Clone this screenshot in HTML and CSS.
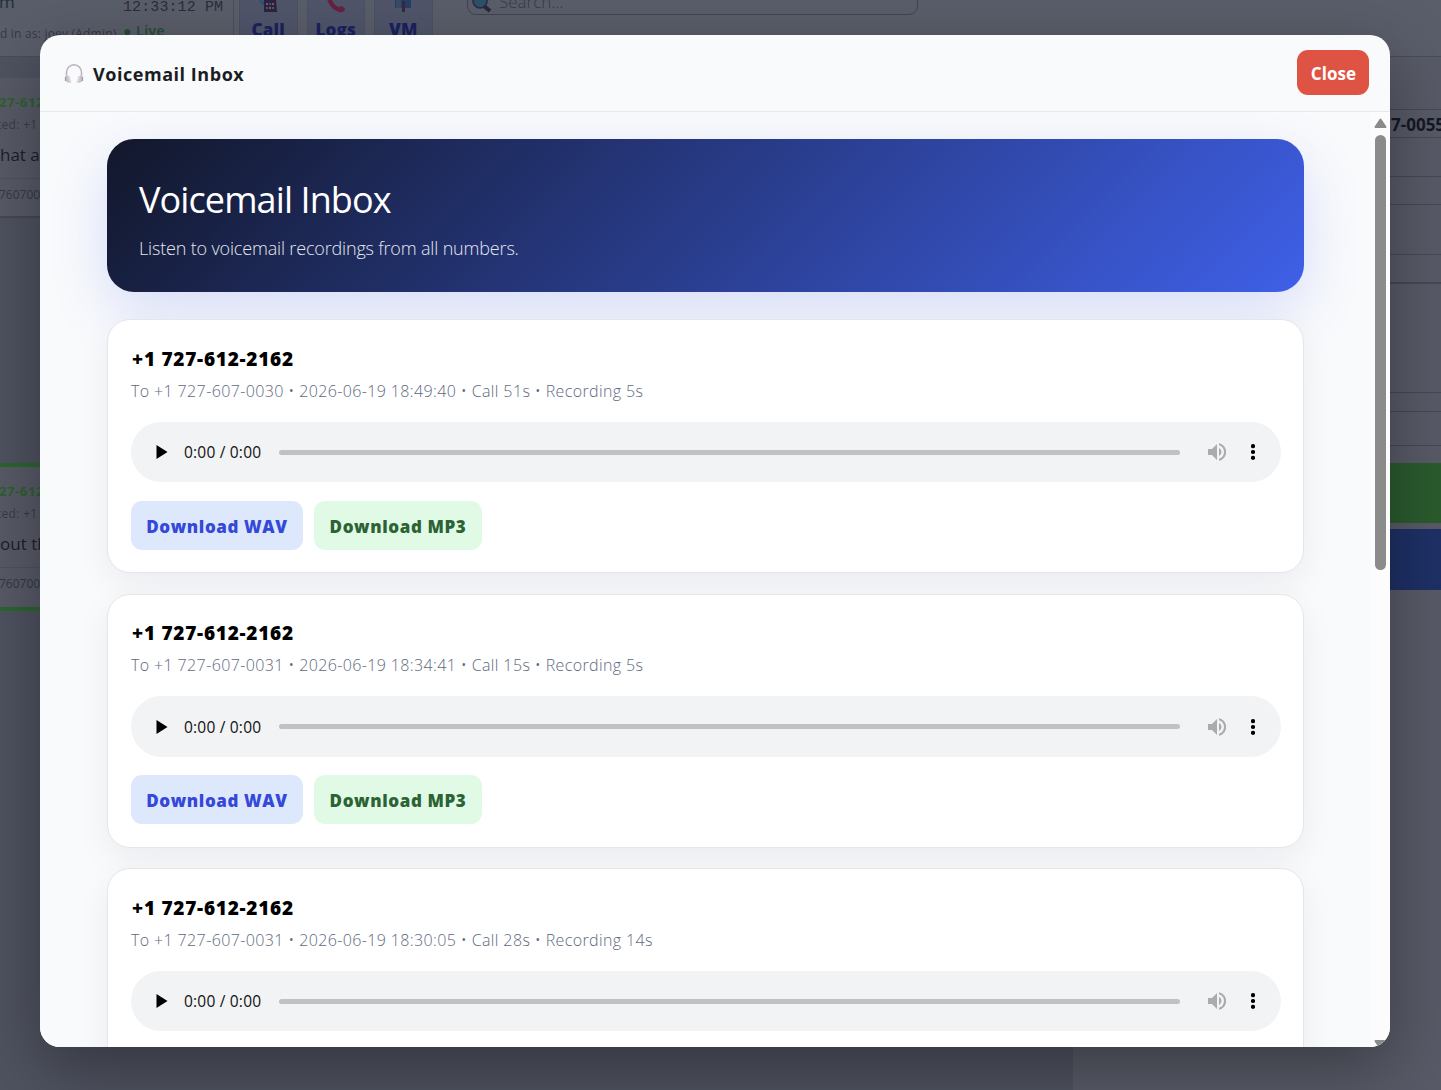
FILE: index.html
```
<!DOCTYPE html>
<html lang="en">
<head>
<meta charset="utf-8">
<title>Voicemail Inbox</title>
<link rel="stylesheet" href="styles.css">
</head>
<body>
<svg class="defs" width="0" height="0" aria-hidden="true">
  <symbol id="play" viewBox="0 0 12 16"><path d="M.5 1v14L11.500 8z"/></symbol>
  <symbol id="volume" viewBox="0 0 18 18"><path d="M0 6v6h4l5 5V1L4 6zM13.500 9A4.500 4.500 0 0 0 11 5v8a4.500 4.500 0 0 0 2.500-4zM11 .2v2.100a7 7 0 0 1 0 13.400v2.100a9 9 0 0 0 0-17.600z"/></symbol>
  <symbol id="more" viewBox="0 0 4 16"><circle cx="2" cy="2.200" r="2.100"/><circle cx="2" cy="8" r="2.100"/><circle cx="2" cy="13.800" r="2.100"/></symbol>
</svg>

<div class="app">
  <header class="topbar">
    <div class="account"><span class="account-name">m</span><span class="account-user">d in as: joey (Admin)</span></div>
    <div class="clock"><span class="clock-time">12:33:12 PM</span><span class="clock-live">● Live</span></div>
    <nav class="shortcuts">
      <div class="shortcut">
        <svg width="20" height="22" viewBox="0 0 20 22"><path d="M0 9l6 1v5l-3-3z" fill="#2b5376"/><path d="M6 8h12l1 13H6z" fill="#2c2245"/><path d="M8 12h2v2H8zM14 12h2v2h-2zM11 16h2v2h-2z" fill="#865b3d"/><path d="M11 12h2v2h-2zM8 16h2v2H8zM14 16h2v2h-2z" fill="#365a79"/></svg>
        <span>Call</span></div>
      <div class="shortcut">
        <svg width="20" height="22" viewBox="0 0 20 22"><path d="M1 8l4-1 2 4q2 4 6 5l3-1 3 3q-1 4-6 3Q4 18 1 8z" fill="#66213f"/></svg>
        <span>Logs</span></div>
      <div class="shortcut">
        <svg width="20" height="22" viewBox="0 0 20 22"><path d="M2 8h16v9H2z" fill="#263f6a"/><path d="M3 9h5v8H3z" fill="#394c68"/><path d="M9 10h3v11H9z" fill="#3a2938"/></svg>
        <span>VM</span></div>
    </nav>
    <div class="search">
      <svg width="20" height="22" viewBox="0 0 20 22"><path d="M12 14l6 5" stroke="#30233f" stroke-width="4"/><circle cx="8" cy="9" r="7" fill="#2e5068" stroke="#252d43" stroke-width="1.500"/></svg>
      <span>Search...</span>
    </div>
  </header>
  <main class="threads">
    <article class="thread">
      <b>27-612</b><small>ted: +1</small><p>hat a</p><footer>760700</footer>
    </article>
    <article class="thread thread-active">
      <b>27-612</b><small>ted: +1</small><p>out th</p><footer>760700</footer>
    </article>
  </main>
  <aside class="details">
    <div class="row row-a"></div>
    <div class="row row-number">7-0055</div>
    <div class="row row-b"></div>
    <div class="row row-c"></div>
    <div class="row row-d"></div>
    <div class="row row-e"></div>
    <div class="row row-f"></div>
    <div class="row row-g"></div>
    <div class="row row-h"></div>
    <div class="row row-i"></div>
    <div class="action action-green"></div>
    <div class="action action-blue"></div>
  </aside>
</div>

<section class="modal" role="dialog" aria-label="Voicemail Inbox">
  <header class="modal-head">
    <svg class="headphones" width="20" height="22" viewBox="0 0 20 22"><path d="M2.500 14V9.500a7.500 7.800 0 0 1 15 0V14" fill="none" stroke="#b9b4bb" stroke-width="1.500"/><path d="M2 12.500l3 .5 2 7-3-.5q-3-1-3-4zM18 12.500l-3 .5-2 7 3-.5q3-1 3-4z" fill="#c9c2cc"/><path d="M5 13.500l1.800 6M15 13.500l-1.800 6" stroke="#e5dbe9" stroke-width="1.800"/><path d="M1.500 14v4M18.500 14v4" stroke="#9d98a1" stroke-width="1.200"/></svg>
    <h2>Voicemail Inbox</h2>
    <button class="close">Close</button>
  </header>
  <div class="modal-body">
    <div class="content">
      <div class="hero">
        <h1>Voicemail Inbox</h1>
        <p>Listen to voicemail recordings from all numbers.</p>
      </div>
      <article class="card">
        <h3>+1 727-612-2162</h3>
        <p class="meta">To +1 727-607-0030 • 2026-06-19 18:49:40 • Call 51s • Recording 5s</p>
        <div class="player"><svg class="play"><use href="#play"/></svg><span class="time">0:00 / 0:00</span><i class="track"></i><svg class="volume"><use href="#volume"/></svg><svg class="more"><use href="#more"/></svg></div>
        <div class="buttons"><a class="btn wav">Download WAV</a><a class="btn mp3">Download MP3</a></div>
      </article>
      <article class="card">
        <h3>+1 727-612-2162</h3>
        <p class="meta">To +1 727-607-0031 • 2026-06-19 18:34:41 • Call 15s • Recording 5s</p>
        <div class="player"><svg class="play"><use href="#play"/></svg><span class="time">0:00 / 0:00</span><i class="track"></i><svg class="volume"><use href="#volume"/></svg><svg class="more"><use href="#more"/></svg></div>
        <div class="buttons"><a class="btn wav">Download WAV</a><a class="btn mp3">Download MP3</a></div>
      </article>
      <article class="card">
        <h3>+1 727-612-2162</h3>
        <p class="meta">To +1 727-607-0031 • 2026-06-19 18:30:05 • Call 28s • Recording 14s</p>
        <div class="player"><svg class="play"><use href="#play"/></svg><span class="time">0:00 / 0:00</span><i class="track"></i><svg class="volume"><use href="#volume"/></svg><svg class="more"><use href="#more"/></svg></div>
      </article>
    </div>
    <div class="scrollbar">
      <svg width="13" height="11" viewBox="0 0 13 11"><path d="M6.500 1.500L11.500 9h-10z" fill="#8b8b8b" stroke="#8b8b8b" stroke-width="2" stroke-linejoin="round"/></svg>
      <i class="thumb"></i>
      <svg class="down" width="13" height="11" viewBox="0 0 13 11"><path d="M6.500 9.500L11.500 2h-10z" fill="#8b8b8b" stroke="#8b8b8b" stroke-width="2" stroke-linejoin="round"/></svg>
    </div>
  </div>
</section>
</body>
</html>
```
FILE: styles.css
```
* { box-sizing: border-box; }
html, body { margin: 0; height: 100%; overflow: hidden; }
body { font-family: "Open Sans", "Noto Sans", sans-serif; background: #585c68; }
h1, h2, h3, p { margin: 0; white-space: nowrap; }
.defs { display: block; width: 0; height: 0; }

/* dimmed page behind the dialog */
.app { display: grid; grid-template: 57px 1fr / 1073px 1fr; height: 1090px; overflow: hidden; }
.topbar { grid-column: 1 / 3; display: flex; height: 57px; border-bottom: 1px solid #484c58; background: #5a5e6a; overflow: hidden; }
.account { width: 122px; display: flex; flex-direction: column; white-space: nowrap; flex: none; }
.account-name { height: 24px; font-size: 17px; line-height: 4px; color: #1c303d; margin-left: -1px; }
.account-user { font-size: 12px; line-height: 20px; color: #353946; letter-spacing: .2px; }
.clock { width: 112px; flex: none; display: flex; flex-direction: column; border-right: 1px solid #4c505c; padding-left: 1px; }
.clock-time { font: 15px/16px "Liberation Mono", monospace; letter-spacing: .1px; color: #292d3a; height: 21px; white-space: nowrap; }
.clock-live { font-size: 14px; font-weight: 600; line-height: 20px; letter-spacing: .5px; color: #214c38; }
.shortcuts { display: flex; gap: 9px; padding-left: 5px; width: 233px; flex: none; }
.shortcut { width: 58.500px; height: 60px; margin-top: -10px; background: #50556a; border: 1px solid #4c5064; display: flex; flex-direction: column; align-items: center; font-size: 17px; font-weight: 800; line-height: 32px; letter-spacing: .2px; color: #1a2260; }
.shortcut svg { flex: none; }
.shortcut span { margin-top: 1px; }
.search { display: flex; width: 451px; height: 25px; margin-top: -10px; border: 1px solid #414551; border-radius: 9px; padding-left: 4px; color: #363a47; font-size: 17px; font-weight: 300; line-height: 22px; gap: 7px; }
.search svg { margin-top: 1px; }
.threads { padding-top: 21px; background: #4f5360; }
.thread { height: 140px; background: #585b67; border-bottom: 2px solid #454955; margin-bottom: 245px; white-space: nowrap; display: flex; flex-direction: column; padding-top: 12px; }
.thread b { font-size: 13px; line-height: 24px; letter-spacing: .6px; color: #2c6130; margin-left: -1px; }
.thread small { font-size: 12px; line-height: 21px; letter-spacing: .3px; color: #383c48; margin-left: -3px; }
.thread p { font-size: 17px; line-height: 40px; height: 43px; color: #1c202d; }
.thread footer { border-top: 1px solid #50535f; font-size: 12px; line-height: 32px; color: #343845; text-indent: -1px; }
.thread-active { height: 148px; border-top: 4px solid #2c6630; border-bottom: 4px solid #2c6630; padding-top: 12px; }
.details { background: #585b67; }
.row { border-bottom: 1px solid #454955; }
.row-a { height: 53px; }
.row-number { height: 28px; padding-left: 318px; font-size: 17px; font-weight: 700; line-height: 30px; white-space: nowrap; color: #141826; }
.row-b { height: 39px; }
.row-c { height: 28px; }
.row-d { height: 50px; }
.row-e { height: 29px; border-bottom-width: 2px; }
.row-f { height: 109px; }
.row-g { height: 19px; }
.row-h { height: 34px; }
.row-i { height: 17px; border: 0; }
.action { height: 60px; margin-bottom: 6px; }
.action-green { background: #2b5b2e; }
.action-blue { height: 61px; background: #1e3066; }

/* dialog */
.modal { position: absolute; left: 40px; top: 35px; width: 1350px; height: 1012px; border-radius: 20px; overflow: hidden; background: #f9fafc; box-shadow: 0 22px 67px rgba(0, 0, 0, .35); display: flex; flex-direction: column; }
.modal-head { height: 77px; flex: none; display: flex; align-items: center; padding: 0 21px 0 24px; border-bottom: 1px solid #e7e9ed; }
.modal-head h2 { margin-left: 9px; margin-top: 2px; flex: 1; font-size: 18px; font-weight: 700; letter-spacing: .54px; color: #1b1d22; }
.headphones { margin-top: 1px; }
.close { width: 72px; height: 45px; margin-bottom: 2px; border: 0; border-radius: 11px; background: #df5345; color: #fff; font: 700 17px "Open Sans", sans-serif; letter-spacing: .1px; padding: 2px 0 0 1px; }
.modal-body { flex: 1; min-height: 0; display: flex; }
.content { flex: 1; min-width: 0; overflow: hidden; padding: 27px 67px 0; background: #f9fafc; }
.hero { height: 153px; border-radius: 27px; padding: 36px 32px 0; color: #fff; background: linear-gradient(135deg, #12172a, #3f60e8); box-shadow: 0 20px 56px rgba(63, 96, 232, .18); margin-bottom: 27.400px; }
.hero h1 { font-size: 36px; font-weight: 400; line-height: 50px; letter-spacing: -.9px; }
.hero p { font-size: 18px; font-weight: 300; line-height: 26px; margin-top: 10px; letter-spacing: -.17px; color: #e3e6f0; }
.card { height: 254px; margin-bottom: 20.500px; border: 1px solid #e4e6eb; border-radius: 23px; background: #fff; padding: 24.500px 22px 0 23px; box-shadow: 0 11px 34px rgba(15, 23, 42, .06); }
.card h3 { font-size: 19px; font-weight: 800; line-height: 28px; letter-spacing: .75px; padding-left: 1px; color: #000; }
.meta { font-size: 16px; font-weight: 300; line-height: 24px; margin-top: 6px; letter-spacing: .375px; color: #5d6980; }
.player { display: flex; align-items: center; height: 60.500px; margin-top: 19.100px; padding: 0 26.500px 0 25px; border-radius: 31px; background: #f1f3f4; }
.play { width: 12px; height: 16px; flex: none; }
.time { width: 95px; margin-left: 16px; font-size: 15.500px; letter-spacing: .2px; color: #111; white-space: nowrap; }
.track { flex: 1; height: 5px; margin-right: 27.500px; border-radius: 3px; background: #c0c1c2; }
.volume { width: 18px; height: 18px; margin-right: 25px; fill: #a9abac; }
.more { width: 4px; height: 16px; }
.buttons { display: flex; gap: 11px; margin-top: 18.300px; }
.btn { height: 49px; border-radius: 11px; text-align: center; font-size: 17px; font-weight: 800; line-height: 51px; letter-spacing: .6px; white-space: nowrap; }
.wav { width: 172px; background: #dee8fd; color: #3548d8; }
.mp3 { width: 168px; background: #e0fae6; color: #2c6335; }
.scrollbar { width: 19px; flex: none; background: #fcfcfc; display: flex; flex-direction: column; align-items: center; padding-top: 6px; }
.scrollbar svg { flex: none; }
.thumb { width: 11px; height: 435px; flex: none; margin-top: 6px; border-radius: 6px; background: #8b8b8b; }
.scrollbar .down { margin-top: auto; margin-bottom: -3px; }
```
